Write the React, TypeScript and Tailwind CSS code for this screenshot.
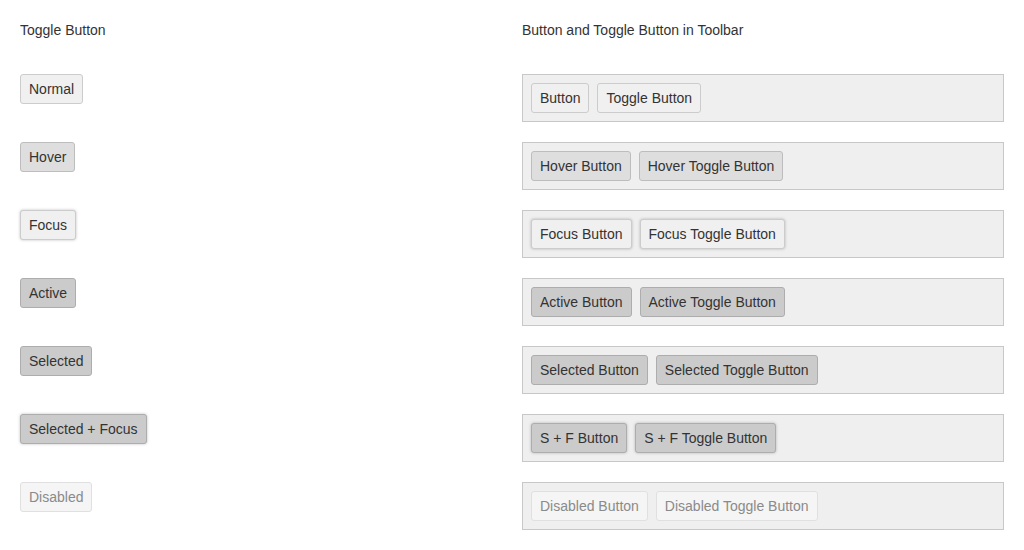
import React from "react";

type Variant = "normal" | "hover" | "focus" | "active" | "selected" | "sf" | "disabled";

const styles: Record<Variant, string> = {
  normal: "bg-[#f0f0f0] border-[#cccccc] text-[#333333]",
  hover: "bg-[#dedede] border-[#bdbdbd] text-[#333333]",
  focus: "bg-[#f0f0f0] border-[#cccccc] text-[#333333] shadow-[0_0_3px_rgba(0,0,0,0.25)]",
  active: "bg-[#cbcbcb] border-[#adadad] text-[#333333]",
  selected: "bg-[#cbcbcb] border-[#adadad] text-[#333333]",
  sf: "bg-[#cbcbcb] border-[#adadad] text-[#333333] shadow-[0_0_3px_rgba(0,0,0,0.25)]",
  disabled: "bg-[#f5f5f5] border-[#e0e0e0] text-[#8a8a8a]",
};

function Btn({ v, children }: { v: Variant; children: React.ReactNode }) {
  return (
    <div
      className={`h-[30px] px-2 border rounded-[3px] flex items-center text-[14px] leading-none whitespace-nowrap ${styles[v]}`}
    >
      {children}
    </div>
  );
}

const rows: { v: Variant; left: string; a: string; b: string }[] = [
  { v: "normal", left: "Normal", a: "Button", b: "Toggle Button" },
  { v: "hover", left: "Hover", a: "Hover Button", b: "Hover Toggle Button" },
  { v: "focus", left: "Focus", a: "Focus Button", b: "Focus Toggle Button" },
  { v: "active", left: "Active", a: "Active Button", b: "Active Toggle Button" },
  { v: "selected", left: "Selected", a: "Selected Button", b: "Selected Toggle Button" },
  { v: "sf", left: "Selected + Focus", a: "S + F Button", b: "S + F Toggle Button" },
  { v: "disabled", left: "Disabled", a: "Disabled Button", b: "Disabled Toggle Button" },
];

export default function App() {
  return (
    <div
      className="w-[1024px] h-[550px] bg-white text-[#333333] pt-5 px-5"
      style={{ fontFamily: '"Liberation Sans", Arial, sans-serif' }}
    >
      <div className="grid grid-cols-[502px_482px]">
        <div className="h-5 text-[14px] leading-5">Toggle Button</div>
        <div className="h-5 text-[14px] leading-5">Button and Toggle Button in Toolbar</div>
      </div>
      <div className="mt-[34px] flex flex-col gap-5">
        {rows.map((r) => (
          <div key={r.left} className="grid grid-cols-[502px_482px]">
            <div className="flex items-start">
              <Btn v={r.v}>{r.left}</Btn>
            </div>
            <div className="h-12 border border-[#c8c8c8] bg-[#efefef] flex items-start gap-2 p-2">
              <Btn v={r.v}>{r.a}</Btn>
              <Btn v={r.v}>{r.b}</Btn>
            </div>
          </div>
        ))}
      </div>
    </div>
  );
}
